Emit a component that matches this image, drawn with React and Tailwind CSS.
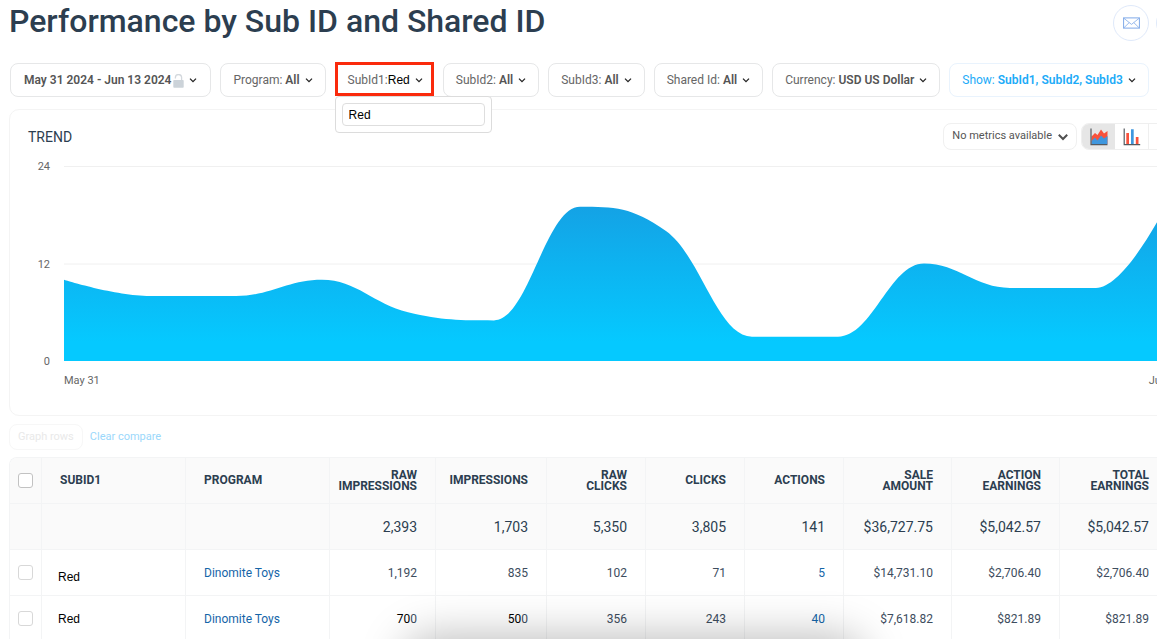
import React, { useState } from "react";

const filters = [
  { label: "", value: "May 31 2024 - Jun 13 2024", lock: true },
  { label: "Program:", value: "All" },
  { label: "SubId1:", value: "Red", open: true },
  { label: "SubId2:", value: "All" },
  { label: "SubId3:", value: "All" },
  { label: "Shared Id:", value: "All" },
  { label: "Currency:", value: "USD US Dollar" },
  { label: "Show:", value: "SubId1, SubId2, SubId3", accent: true },
];

const columns = [
  ["Raw", "Impressions"],
  ["Impressions"],
  ["Raw", "Clicks"],
  ["Clicks"],
  ["Actions"],
  ["Sale", "Amount"],
  ["Action", "Earnings"],
  ["Total", "Earnings"],
];

const totals = ["2,393", "1,703", "5,350", "3,805", "141", "$36,727.75", "$5,042.57", "$5,042.57"];

const rows = [
  {
    sub: "Red",
    low: true,
    program: "Dinomite Toys",
    cells: ["1,192", "835", "102", "71", "5", "$14,731.10", "$2,706.40", "$2,706.40"],
  },
  {
    sub: "Red",
    program: "Dinomite Toys",
    cells: [
      <><span className="text-black">70</span>0</>,
      <><span className="text-black">50</span>0</>,
      "356",
      "243",
      "40",
      "$7,618.82",
      "$821.89",
      "$821.89",
    ],
  },
];

const daily = [10, 8, 8, 10, 6, 5, 19, 16, 3, 3, 12, 9, 9, 23];
const CHART_W = 1118;
const CHART_H = 195;
const CHART_MAX = 24;

function splinePath(values) {
  const pts = values.map((v, i) => ({
    x: (i * CHART_W) / (values.length - 1),
    y: CHART_H - (v / CHART_MAX) * CHART_H,
  }));
  const handles = pts.map((p, i) => {
    const a = pts[i - 1];
    const b = pts[i + 1];
    if (!a || !b) return { lx: p.x, ly: p.y, rx: p.x, ry: p.y };
    const lx = (1.5 * p.x + a.x) / 2.5;
    const rx = (1.5 * p.x + b.x) / 2.5;
    let ly = (1.5 * p.y + a.y) / 2.5;
    let ry = (1.5 * p.y + b.y) / 2.5;
    const fix = ((ry - ly) * (rx - p.x)) / (rx - lx) + p.y - ry;
    ly += fix;
    ry += fix;
    if (ly > a.y && ly > p.y) {
      ly = Math.max(a.y, p.y);
      ry = 2 * p.y - ly;
    } else if (ly < a.y && ly < p.y) {
      ly = Math.min(a.y, p.y);
      ry = 2 * p.y - ly;
    }
    if (ry > b.y && ry > p.y) {
      ry = Math.max(b.y, p.y);
      ly = 2 * p.y - ry;
    } else if (ry < b.y && ry < p.y) {
      ry = Math.min(b.y, p.y);
      ly = 2 * p.y - ry;
    }
    return { lx, ly, rx, ry };
  });
  let d = `M${pts[0].x} ${pts[0].y}`;
  for (let i = 1; i < pts.length; i++) {
    const h = handles[i - 1];
    const k = handles[i];
    d += ` C${h.rx} ${h.ry} ${k.lx} ${k.ly} ${pts[i].x} ${pts[i].y}`;
  }
  return `${d} L${CHART_W} ${CHART_H} L0 ${CHART_H} Z`;
}

function Chevron() {
  return (
    <svg className="size-2 shrink-0" viewBox="0 0 8 8" fill="none" stroke="#222" strokeWidth="1.3" aria-hidden="true">
      <path d="M1 2.6 4 5.6 7 2.6" />
    </svg>
  );
}

function Lock() {
  return (
    <svg className="h-[14px] w-[11px] shrink-0 translate-y-px" viewBox="0 0 11 14" aria-hidden="true">
      <path d="M2.4 4.600V3.600a3.100 3 0 0 1 6.200 0V6.500" fill="none" stroke="#d3d8dd" strokeWidth="1.300" />
      <rect x="0.3" y="6" width="10.4" height="7.8" rx="0.8" fill="#ccd3d9" />
    </svg>
  );
}

function Envelope() {
  return (
    <svg className="h-3 w-[17px]" viewBox="0 0 17 12" fill="none" stroke="#7fa9e8" strokeWidth="1" aria-hidden="true">
      <rect x="0.6" y="0.9" width="15.8" height="10.2" />
      <path d="M0.8 1.2 8.5 7.4 16.2 1.2M0.8 10.9 6.2 5.6M16.2 10.9 10.8 5.6" strokeWidth="0.8" />
    </svg>
  );
}

function AreaIcon() {
  return (
    <svg className="size-[18px]" viewBox="0 0 18 18" aria-hidden="true">
      <path d="M1.500 16V8.500L5 5 7.500 7 11 1.500l3 4L17.500 3v13z" fill="#f9523c" />
      <path d="M1.500 16v-3L5 9.500l2.500 3L11 7.500l3 3 3.500-2.500V16z" fill="#3f97de" />
      <path d="M1 .5v16.200H17.500" fill="none" stroke="#555a60" strokeWidth="1.200" />
    </svg>
  );
}

function BarsIcon() {
  return (
    <svg className="size-[18px]" viewBox="0 0 18 18" aria-hidden="true">
      <path d="M3.300 5H6v11H3.300zM12.800 9h2.700v7h-2.700z" fill="#f9523c" />
      <path d="M8 1.200h2.700V16H8z" fill="#3f97de" />
      <path d="M1.200 .5v16.200H17.200" fill="none" stroke="#555a60" strokeWidth="1.200" />
    </svg>
  );
}

function Filter({ item }) {
  const [query, setQuery] = useState("Red");
  const tone = item.accent
    ? "border-[#e9f3fd] text-[#1cabf8]"
    : item.open
      ? "border-transparent text-[#666]"
      : "border-[#e6e7e8] text-[#666]";
  return (
    <div className="relative shrink-0">
      <button
        type="button"
        className={`flex h-[34px] items-center rounded-lg border bg-white text-xs whitespace-nowrap ${item.open ? "pr-[10px] pl-3" : item.lock ? "px-[13px]" : "px-3"} ${tone}`}
      >
        {item.label && <span>{item.label}</span>}
        {item.open ? (
          <span className="font-['Liberation_Sans',sans-serif] text-black">{item.value}</span>
        ) : (
          <span className={`font-semibold ${item.label ? "ml-[3px]" : ""} ${item.accent ? "" : "text-[#555]"}`}>{item.value}</span>
        )}
        {item.lock && <span className="ml-[2px]"><Lock /></span>}
        <span className="ml-[5px]"><Chevron /></span>
      </button>
      {item.open && (
        <>
          <span className="pointer-events-none absolute inset-x-0 -top-px bottom-px border-3 border-[#fa2a0c]" />
          <div className="absolute top-[33px] left-0 z-10 rounded border border-[#dcdcdc] bg-white p-[6px]">
            <input
              aria-label="Search SubId1"
              value={query}
              onChange={(e) => setQuery(e.target.value)}
              className="block h-[23px] w-[143px] rounded-sm border border-[#dedede] px-[6px] font-['Liberation_Sans',sans-serif] text-xs text-black outline-none"
            />
          </div>
        </>
      )}
    </div>
  );
}

function CheckBox({ label, strong }) {
  return (
    <input
      type="checkbox"
      aria-label={label}
      className={`mx-auto block size-[15px] appearance-none rounded-[3px] border bg-white checked:bg-sky-500 ${strong ? "border-[#c2c2c2]" : "border-[#d8d8d8]"}`}
    />
  );
}

function Trend() {
  return (
    <section className="mt-3 rounded-[10px] border border-[#f4f4f4] pr-[19px] pb-[26px] pl-[18px]">
      <div className="flex items-center pt-[13px]">
        <h2 className="flex-1 text-sm text-[#2c3e50]">TREND</h2>
        <button
          type="button"
          className="flex h-[27px] items-center gap-[6px] rounded-lg border border-[#f0f0f0] px-2 text-[11px] text-[#555]"
        >
          No metrics available
          <svg className="size-[10px]" viewBox="0 0 10 10" fill="none" stroke="#505050" strokeWidth="2" aria-hidden="true">
            <path d="M0.800 2.800 5 7 9.200 2.800" />
          </svg>
        </button>
        <div className="ml-1 flex h-[27px] overflow-hidden rounded-lg border border-[#efefef]">
          <button type="button" aria-label="Area chart" className="flex w-[33px] items-center justify-center bg-[#e6e6e6]">
            <AreaIcon />
          </button>
          <button type="button" aria-label="Bar chart" className="flex w-[33px] items-center justify-center">
            <BarsIcon />
          </button>
          <button type="button" aria-label="More charts" className="w-[33px] border-l border-[#efefef]" />
        </div>
      </div>
      <div className="mt-2 flex text-[11px] leading-4 text-[#666]">
        <div className="flex h-[212px] w-[22px] flex-col justify-between pt-px text-right">
          <span>24</span>
          <span>12</span>
          <span>0</span>
        </div>
        <div className="ml-[14px] flex-1 pt-2">
          <svg className="block h-[195px] w-full" viewBox={`0 0 ${CHART_W} ${CHART_H}`} preserveAspectRatio="none" role="img" aria-label="Daily trend">
            <defs>
              <linearGradient id="trendFill" x1="0" y1="0" x2="0" y2={CHART_H} gradientUnits="userSpaceOnUse">
                <stop offset="0.150" stopColor="#159fe3" />
                <stop offset="0.900" stopColor="#05c9ff" />
              </linearGradient>
            </defs>
            <path d={`M0 .5H${CHART_W}M0 98H${CHART_W}`} stroke="#f0f0f0" />
            <path d={splinePath(daily)} fill="url(#trendFill)" />
          </svg>
          <div className="mt-3 flex justify-between">
            <span>May 31</span>
            <span>Jun 13</span>
          </div>
        </div>
      </div>
    </section>
  );
}

function Report() {
  const line = "border-[#f3f4f5]";
  const numeric = `border-r border-b ${line} pr-[18px] text-right`;
  return (
    <div className="mt-[7px] overflow-hidden rounded-t-lg border-t border-l border-[#f3f4f5]">
      <table className="w-full table-fixed border-separate border-spacing-0 text-xs text-[#3d4d5e]">
        <colgroup>
          <col className="w-8" />
          <col className="w-36" />
          <col className="w-36" />
          <col className="w-[106px]" />
          <col className="w-[111px]" />
          <col className="w-[99px]" />
          <col className="w-[99px]" />
          <col className="w-[99px]" />
          <col className="w-[108px]" />
          <col className="w-[108px]" />
          <col className="w-[108px]" />
          <col />
        </colgroup>
        <thead className="bg-[#fafafa] text-[#2c3e50]">
          <tr className="h-[46px] leading-[11px] uppercase">
            <th className={`border-r border-b ${line}`}><CheckBox label="Select all rows" strong /></th>
            <th className={`border-r border-b ${line} pl-[18px] text-left font-bold`}>SubId1</th>
            <th className={`border-r border-b ${line} pl-[18px] text-left font-bold`}>Program</th>
            {columns.map((words) => (
              <th key={words.join(" ")} className={`${numeric} font-bold`}>
                {words[0]}
                {words[1] && <><br />{words[1]}</>}
              </th>
            ))}
            <th className={`border-b ${line}`} />
          </tr>
          <tr className="h-[46px] text-sm">
            <td className={`border-r border-b ${line}`} />
            <td className={`border-r border-b ${line}`} />
            <td className={`border-r border-b ${line}`} />
            {totals.map((t, i) => (
              <td key={i} className={numeric}>{t}</td>
            ))}
            <td className={`border-b ${line}`} />
          </tr>
        </thead>
        <tbody>
          {rows.map((r, n) => (
            <tr key={n} className="h-[46px]">
              <td className={`border-r border-b ${line}`}><CheckBox label={`Select row ${n + 1}`} /></td>
              <td className={`border-r border-b ${line} pl-4 font-['Liberation_Sans',sans-serif] text-black ${r.low ? "pt-2" : ""}`}>{r.sub}</td>
              <td className={`border-r border-b ${line} pl-[18px]`}>
                <a href="#program" className="text-[#1565a8]">{r.program}</a>
              </td>
              {r.cells.map((c, i) => (
                <td key={i} className={numeric}>
                  {i === 4 ? <a href="#actions" className="text-[#1565a8]">{c}</a> : c}
                </td>
              ))}
              <td className={`border-b ${line}`} />
            </tr>
          ))}
        </tbody>
      </table>
    </div>
  );
}

export default function App() {
  return (
    <div className="relative h-screen overflow-hidden bg-white font-[Roboto,sans-serif]">
      <main className="min-w-[1212px] pr-[10px] pl-[9px]">
        <header className="flex h-[63px] items-start justify-between">
          <h1 className="text-[32px] leading-[43px] font-medium text-[#2c3e50]">Performance by Sub ID and Shared ID</h1>
          <div className="mt-[5px] flex gap-[7px] pr-[10px]">
            <button type="button" aria-label="Email report" className="flex size-9 items-center justify-center rounded-full border border-[#dfe9fa]">
              <Envelope />
            </button>
            <button type="button" aria-label="More options" className="size-9 rounded-full border border-[#dfe9fa]" />
          </div>
        </header>
        <div className="flex gap-[9px] pl-px">
          {filters.map((f) => (
            <Filter key={f.label} item={f} />
          ))}
          <button type="button" aria-label="Apply" className="h-[34px] flex-1 rounded-lg border border-[#dfeffc] bg-[#f2f9ff]" />
        </div>
        <Trend />
        <div className="mt-2 flex items-center gap-[7px] text-[11px]">
          <button type="button" disabled className="h-[26px] rounded-lg border border-[#f7f7f7] px-2 text-[#e9e9e9]">Graph rows</button>
          <a href="#clear" className="text-[#9bd8fb]">Clear compare</a>
        </div>
        <Report />
      </main>
      <div className="pointer-events-none absolute inset-x-0 bottom-0 flex h-12 justify-center overflow-hidden">
        <div className="mt-14 ml-[110px] h-10 w-[440px] shrink-0 rounded-full shadow-[0_0_44px_12px_rgba(0,0,0,0.26)]" />
      </div>
    </div>
  );
}
